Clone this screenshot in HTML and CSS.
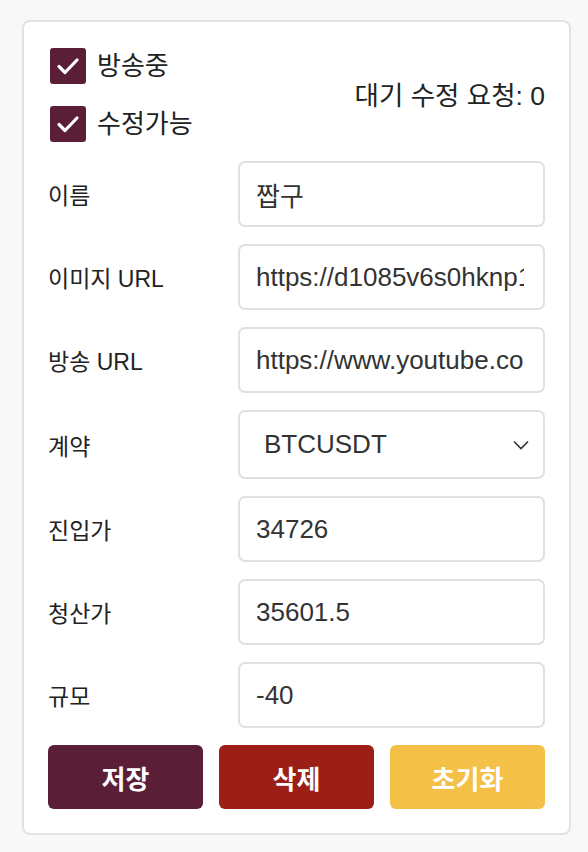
FILE: index.html
```html
<!DOCTYPE html>
<html lang="ko">
<head>
  <meta charset="UTF-8">
  <meta name="viewport" content="width=device-width, initial-scale=1.0">
  <title>방송 편집</title>
  <link rel="stylesheet" href="styles.css">
</head>
<body>
  <div class="editor-card">
    <div class="editor-head">
      <div class="toggles">
        <label class="check-row">
          <span class="check-box">
            <svg viewBox="0 0 36 36" width="36" height="36"><path d="M9 18.5l6 6L27 12" fill="none" stroke="#fff" stroke-width="3.2" stroke-linecap="round" stroke-linejoin="round"/></svg>
          </span>
          <span class="check-text">방송중</span>
        </label>
        <label class="check-row">
          <span class="check-box">
            <svg viewBox="0 0 36 36" width="36" height="36"><path d="M9 18.5l6 6L27 12" fill="none" stroke="#fff" stroke-width="3.2" stroke-linecap="round" stroke-linejoin="round"/></svg>
          </span>
          <span class="check-text">수정가능</span>
        </label>
      </div>
      <div class="pending">대기 수정 요청: 0</div>
    </div>

    <div class="field-grid">
      <label class="field-label">이름</label>
      <input class="field-input" type="text" value="짭구" readonly>

      <label class="field-label">이미지 URL</label>
      <input class="field-input" type="text" value="https://d1085v6s0hknp1.cloudfront.net/images/profile.png" readonly>

      <label class="field-label">방송 URL</label>
      <input class="field-input" type="text" value="https://www.youtube.com/watch?v=live" readonly>

      <label class="field-label">계약</label>
      <div class="field-select">
        <span>BTCUSDT</span>
        <svg viewBox="0 0 16 10" width="16" height="10"><path d="M1 1.5l7 7 7-7" fill="none" stroke="#333" stroke-width="1.6"/></svg>
      </div>

      <label class="field-label">진입가</label>
      <input class="field-input" type="text" value="34726" readonly>

      <label class="field-label">청산가</label>
      <input class="field-input" type="text" value="35601.5" readonly>

      <label class="field-label">규모</label>
      <input class="field-input" type="text" value="-40" readonly>
    </div>

    <div class="actions">
      <button class="btn btn-save">저장</button>
      <button class="btn btn-delete">삭제</button>
      <button class="btn btn-reset">초기화</button>
    </div>
  </div>
</body>
</html>
```

FILE: styles.css
```css
body {
  margin: 0;
  padding: 0;
  background: #f8f8f8;
  font-family: 'Liberation Sans', 'Noto Sans CJK KR', sans-serif;
  color: #222;
}

.editor-card {
  box-sizing: border-box;
  width: 549px;
  margin: 20px 0 0 22px;
  padding: 26px 24px 24px;
  background: #fff;
  border: 2px solid #e2e2e2;
  border-radius: 8px;
}

.editor-head {
  display: flex;
  justify-content: space-between;
  align-items: center;
  margin-bottom: 19px;
}

.toggles {
  display: flex;
  flex-direction: column;
  gap: 22px;
  padding-left: 2px;
}

.check-row {
  display: flex;
  align-items: center;
  gap: 11px;
  height: 36px;
}

.check-box {
  width: 36px;
  height: 36px;
  border-radius: 3px;
  background: #5b1e37;
  display: flex;
}

.check-text {
  font-size: 26px;
  line-height: 36px;
  color: #222;
}

.pending {
  font-size: 26.5px;
  line-height: 36px;
  color: #222;
  padding-top: 2px;
}

.field-grid {
  display: grid;
  grid-template-columns: 190px 1fr;
  row-gap: 17px;
  align-items: center;
}

.field-label {
  font-size: 23px;
  color: #222;
}

.field-input {
  box-sizing: border-box;
  width: 100%;
  height: 66px;
  margin: 0;
  padding: 0 19px 0 16px;
  border: 2px solid #e0e0e0;
  border-radius: 7px;
  background: #fff;
  font-family: 'Liberation Sans', 'Noto Sans CJK KR', sans-serif;
  font-size: 26px;
  color: #333;
  outline: none;
}

.field-select {
  box-sizing: border-box;
  height: 69px;
  padding: 0 14px 0 24px;
  border: 2px solid #e0e0e0;
  border-radius: 7px;
  font-size: 26px;
  color: #333;
  display: flex;
  align-items: center;
  justify-content: space-between;
}

.actions {
  display: grid;
  grid-template-columns: repeat(3, 1fr);
  gap: 16px;
  margin-top: 17px;
}

.btn {
  height: 64px;
  border: none;
  border-radius: 6px;
  color: #fff;
  font-family: 'Noto Sans CJK KR', sans-serif;
  font-size: 26px;
  font-weight: bold;
}

.btn-save {
  background: #5b1e37;
}

.btn-delete {
  background: #9b1f16;
}

.btn-reset {
  background: #f4c048;
}
```
